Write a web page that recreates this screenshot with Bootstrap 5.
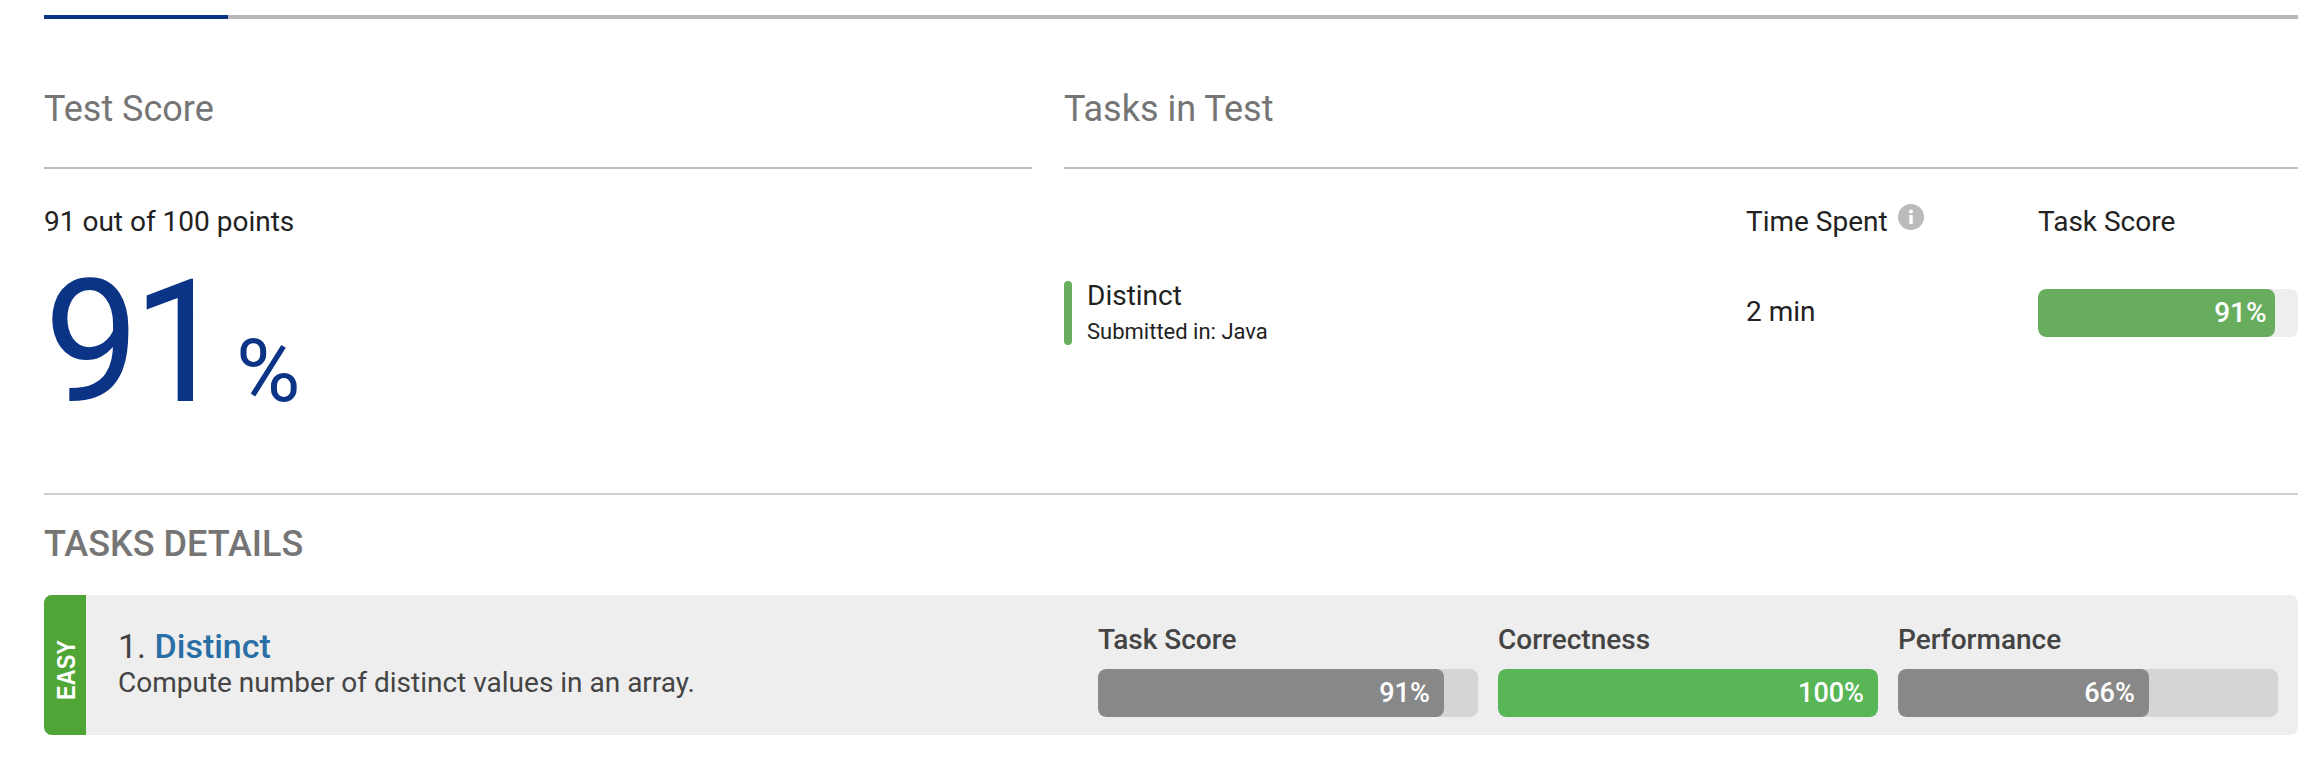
<!DOCTYPE html>
<html lang="en">
<head>
  <meta charset="UTF-8">
  <title>Test Report</title>
  <meta name="viewport" content="width=device-width, initial-scale=1.0"/>
  <link href="https://cdn.jsdelivr.net/npm/bootstrap@5.3.3/dist/css/bootstrap.min.css" rel="stylesheet"/>
  <style>
    body { font-family: Roboto, "Liberation Sans", sans-serif; color: #222; background: #fff; }
    .report-wrap { padding: 15px 24px 0 44px; }
    .tab-track { height: 4px; background: #b8b8b8; }
    .tab-active { width: 184px; height: 4px; background: #0b3487; }
    .summary-row { margin-top: 71px; gap: 32px; height: 403px; }
    .score-col { width: 988px; flex: none; }
    .tasks-col { flex: 1; }
    .sec-title { font-size: 36px; line-height: 38px; color: #757575; padding-bottom: 39px; border-bottom: 2px solid #bdbdbd; margin: 0; font-weight: 400; }
    .points { font-size: 28px; line-height: 32px; margin-top: 37px; }
    .big-score { color: #0b3487; font-size: 170px; line-height: 172px; margin-top: 19px; letter-spacing: -7px; }
    .big-score span { font-size: 88px; margin-left: 15px; letter-spacing: 0; }
    .tasks-head { height: 32px; margin-top: 37px; font-size: 28px; line-height: 32px; }
    .col-time { width: 292px; flex: none; }
    .col-score { width: 260px; flex: none; }
    .info-dot { width: 26px; height: 26px; margin: -2px 0 0 10px; }
    .task-line { margin-top: 43px; height: 64px; }
    .task-mark { width: 8px; height: 64px; border-radius: 4px; background: #68ad5e; margin-right: 15px; }
    .task-name { font-size: 28px; line-height: 34px; margin-top: -2px; }
    .task-lang { font-size: 22px; line-height: 28px; margin-top: 5px; }
    .time-val { font-size: 28px; padding-bottom: 2px; }
    .meter { background: #eee; border-radius: 8px; overflow: hidden; height: 48px; }
    .meter .progress-bar { border-radius: 8px; text-align: right; padding-right: 8px; font-size: 28px; font-weight: 500; color: #fff; overflow: visible; }
    .fill-soft { background: #68ad5e; }
    .section-rule { border-top: 2px solid #cfcfcf; }
    .details-title { font-size: 36px; line-height: 38px; font-weight: 500; color: #757575; margin: 30px 0 0; }
    .task-panel { background: #eee; border-radius: 8px; height: 140px; margin-top: 32px; overflow: hidden; }
    .level-tag { width: 42px; background: #4fa535; color: #fff; display: flex; align-items: center; justify-content: center; padding-top: 10px; }
    .level-tag span { writing-mode: vertical-rl; transform: rotate(180deg) scaleX(1.2); font-family: "Liberation Sans", sans-serif; font-weight: 700; font-size: 22px; }
    .panel-info { padding: 0 0 3px 32px; width: 1012px; flex: none; color: #444; }
    .panel-title { font-size: 34px; line-height: 38px; color: #444; }
    .panel-title a { color: #2a6ea6; text-decoration: none; font-weight: 500; }
    .panel-desc { font-size: 28px; line-height: 36px; }
    .metric { width: 380px; flex: none; }
    .metric-label { font-size: 28px; line-height: 32px; font-weight: 500; color: #444; margin-bottom: 13px; }
    .metric .meter { background: #d5d5d5; }
    .metric .progress-bar { padding-right: 14px; font-size: 27px; }
    .fill-grey { background: #888; }
    .fill-green { background: #59b656; }
    .metric-row { gap: 20px; padding-top: 29px; }
  </style>
</head>
<body>
  <div class="report-wrap">
    <div class="tab-track"><div class="tab-active"></div></div>

    <div class="d-flex summary-row">
      <div class="score-col">
        <h2 class="sec-title">Test Score</h2>
        <div class="points">91 out of 100 points</div>
        <div class="big-score">91<span>%</span></div>
      </div>
      <div class="tasks-col">
        <h2 class="sec-title">Tasks in Test</h2>
        <div class="d-flex tasks-head">
          <div class="flex-grow-1"></div>
          <div class="col-time d-flex align-items-start">Time Spent
            <svg class="info-dot" viewBox="0 0 26 26"><circle cx="13" cy="13" r="13" fill="#bbb"/><circle cx="13" cy="7.5" r="2" fill="#fff"/><rect x="11.3" y="11" width="3.4" height="9" fill="#fff"/></svg>
          </div>
          <div class="col-score">Task Score</div>
        </div>
        <div class="d-flex align-items-center task-line">
          <div class="task-mark"></div>
          <div class="flex-grow-1">
            <div class="task-name">Distinct</div>
            <div class="task-lang">Submitted in: Java</div>
          </div>
          <div class="col-time time-val">2 min</div>
          <div class="col-score">
            <div class="progress meter"><div class="progress-bar fill-soft" style="width: 91%">91%</div></div>
          </div>
        </div>
      </div>
    </div>

    <div class="section-rule"></div>
    <h3 class="details-title">TASKS DETAILS</h3>

    <div class="d-flex task-panel">
      <div class="level-tag"><span>EASY</span></div>
      <div class="panel-info d-flex flex-column justify-content-center">
        <div class="panel-title">1. <a href="#">Distinct</a></div>
        <div class="panel-desc">Compute number of distinct values in an array.</div>
      </div>
      <div class="d-flex align-items-start metric-row">
        <div class="metric">
          <div class="metric-label">Task Score</div>
          <div class="progress meter"><div class="progress-bar fill-grey" style="width: 91%">91%</div></div>
        </div>
        <div class="metric">
          <div class="metric-label">Correctness</div>
          <div class="progress meter"><div class="progress-bar fill-green" style="width: 100%">100%</div></div>
        </div>
        <div class="metric">
          <div class="metric-label">Performance</div>
          <div class="progress meter"><div class="progress-bar fill-grey" style="width: 66%">66%</div></div>
        </div>
      </div>
    </div>
  </div>

  <script src="https://cdn.jsdelivr.net/npm/bootstrap@5.3.3/dist/js/bootstrap.bundle.min.js"></script>
</body>
</html>
